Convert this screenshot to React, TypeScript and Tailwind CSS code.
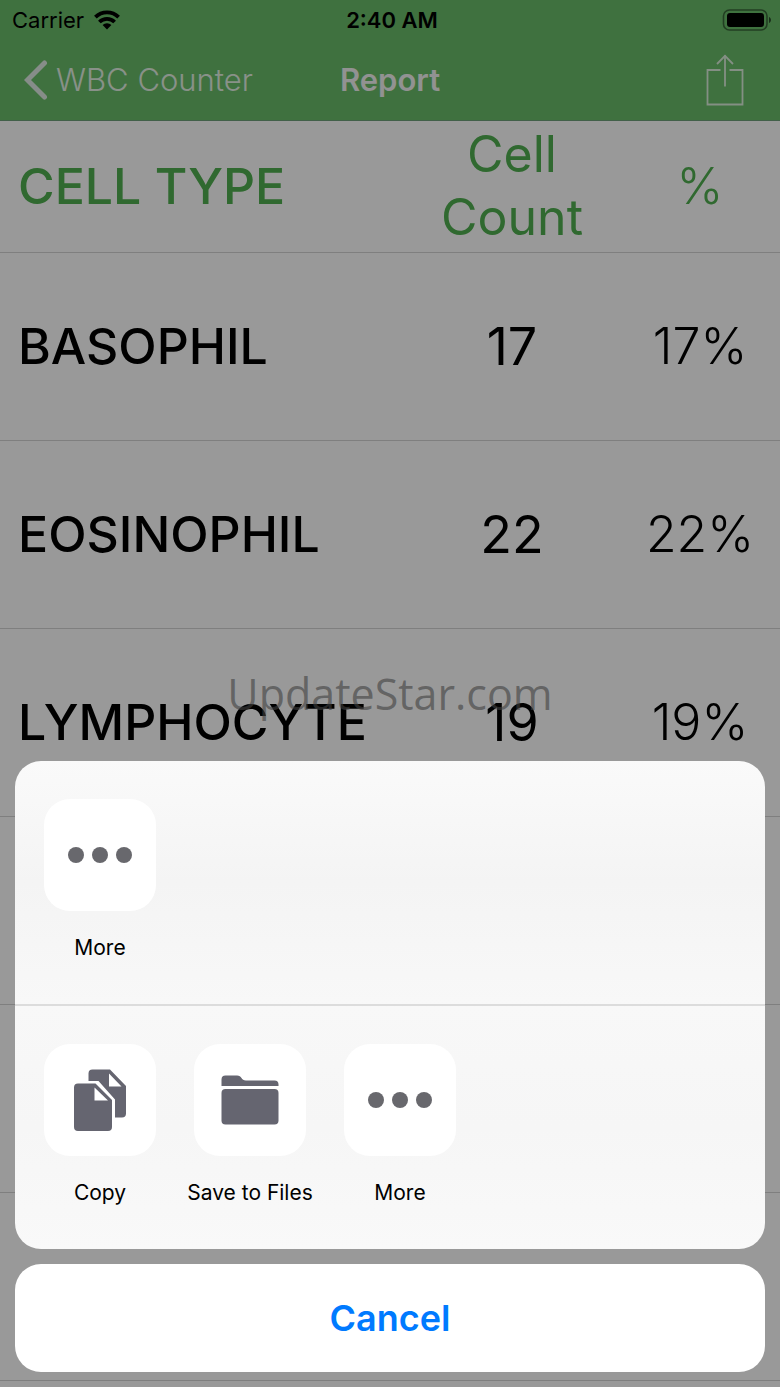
import type { ReactNode } from "react";

interface CellRow {
  name: string;
  count: number;
}

const rows: CellRow[] = [
  { name: "BASOPHIL", count: 17 },
  { name: "EOSINOPHIL", count: 22 },
  { name: "LYMPHOCYTE", count: 19 },
];

// blank rows that continue the table under the sheet
const EMPTY_ROWS = 4;

function WifiIcon() {
  return (
    <svg width="26" height="20" viewBox="0 0 26 20" fill="none" stroke="black" strokeWidth="3.8" aria-hidden>
      <path d="M1.4 7.2a16.4 16.4 0 0 1 23.2 0" />
      <path d="M5.400 12a10.700 10.700 0 0 1 15.200 0" />
      <path d="M8.600 15a6.200 6.200 0 0 1 8.800 0L13 19.400Z" fill="black" stroke="none" />
    </svg>
  );
}

function BatteryIcon() {
  return (
    <svg width="50" height="22" viewBox="0 0 50 22" aria-hidden>
      <rect x="1.500" y="1" width="43.500" height="20" rx="6" fill="none" stroke="black" strokeOpacity="0.45" strokeWidth="1.600" />
      <rect x="5" y="4" width="37" height="14" rx="3" fill="black" />
      <path d="M47 8c2.600 1 2.600 5 0 6z" fill="black" fillOpacity="0.6" />
    </svg>
  );
}

function BackIcon() {
  return (
    <svg width="24" height="40" viewBox="0 0 24 40" fill="none" stroke="#e0ece4" strokeWidth="5" strokeLinecap="round" strokeLinejoin="miter" aria-hidden>
      <path d="M20.500 3 3.500 20l17 17" />
    </svg>
  );
}

function ShareIcon() {
  return (
    <svg width="38" height="52" viewBox="0 0 38 52" fill="none" stroke="#dcefdc" strokeWidth="1.8" aria-hidden>
      <path d="M14.500 16H1.500v34.500h35V16h-13" />
      <path d="M19 32.500V1.500" />
      <path d="M11 10 19 1.800 27 10" />
    </svg>
  );
}

function DotsIcon() {
  return (
    <svg width="64" height="16" viewBox="0 0 64 16" fill="#68686d" aria-hidden>
      <circle cx="8" cy="8" r="8" />
      <circle cx="32" cy="8" r="8" />
      <circle cx="56" cy="8" r="8" />
    </svg>
  );
}

function CopyIcon() {
  return (
    <svg width="52" height="62" viewBox="0 0 52 62" fill="#656570" aria-hidden>
      <path
        fillRule="evenodd"
        d="M14.500 12V4.500a4 4 0 0 1 4-4H36L52 17v27.500a4 4 0 0 1-4 4h-7V30.500L24.500 12ZM35 4.500V17.500H47.500Z"
      />
      <path
        fillRule="evenodd"
        d="M4 14.500H21.500L38 31v27a4 4 0 0 1-4 4H4a4 4 0 0 1-4-4V18.500a4 4 0 0 1 4-4ZM20.500 18.500V31.500H34Z"
      />
    </svg>
  );
}

function FolderIcon() {
  return (
    <svg width="58" height="50" viewBox="0 0 58 50" fill="#656570" aria-hidden>
      <path d="M.5 11V4.500a4 4 0 0 1 4-4H16c5 0 4 5 9 5h28.500a4 4 0 0 1 4 4V11Z" />
      <rect x=".5" y="14" width="57" height="35.500" rx="4" />
    </svg>
  );
}

function SheetItem({ label, children }: { label: string; children: ReactNode }) {
  return (
    <button type="button" className="flex w-[150px] flex-col items-center gap-6">
      <span className="flex size-28 items-center justify-center rounded-[26px] bg-white">{children}</span>
      <span className="text-[21px] leading-[26px] whitespace-nowrap text-black">{label}</span>
    </button>
  );
}

function Report() {
  return (
    <div className="bg-white">
      <header className="border-b border-[#6fa07a] bg-[#69bc69]">
        <div className="grid h-10 grid-cols-[1fr_auto_1fr] items-center pr-2 pl-3 text-[22px] text-black">
          <div className="flex items-center gap-[10px]">
            <span>Carrier</span>
            <WifiIcon />
          </div>
          <span className="text-center font-semibold">2:40 AM</span>
          <div className="flex justify-end">
            <BatteryIcon />
          </div>
        </div>
        <nav className="grid h-20 grid-cols-[1fr_auto_1fr] items-center px-6 text-[31px]">
          <a href="#counter" className="flex items-center gap-2 font-light text-[#e4f2e4]">
            <BackIcon />
            WBC Counter
          </a>
          <h1 className="font-semibold text-[#f4f4f4]">Report</h1>
          <button type="button" aria-label="Share" className="mr-3 justify-self-end">
            <ShareIcon />
          </button>
        </nav>
      </header>

      <table className="w-full table-fixed border-collapse text-[50px] leading-[63px] text-black">
        <thead>
          <tr className="h-[131px] border-b border-[#d4d4d4] text-[#50b050]">
            <th className="pl-[18px] text-left font-medium">CELL TYPE</th>
            <th className="w-[216px] px-6 font-normal">Cell Count</th>
            <th className="w-40 font-light">%</th>
          </tr>
        </thead>
        <tbody>
          {rows.map((row) => (
            <tr key={row.name} className="h-[188px] border-b border-[#d4d4d4]">
              <th scope="row" className="pl-[18px] text-left font-medium">{row.name}</th>
              <td className="text-center text-[52px]">{row.count}</td>
              <td className="text-center font-light">{row.count}%</td>
            </tr>
          ))}
          {Array.from({ length: EMPTY_ROWS }, (_, i) => (
            <tr key={i} className="h-[188px] border-b border-[#d4d4d4]">
              <td colSpan={3} />
            </tr>
          ))}
        </tbody>
      </table>
    </div>
  );
}

export default function App() {
  return (
    <div className="relative h-screen overflow-hidden font-['Inter','Liberation_Sans',sans-serif]">
      <Report />
      <div className="absolute inset-0 bg-black/40" />
      <p className="absolute inset-x-0 top-1/2 -translate-y-1/2 text-center font-['Open_Sans','Noto_Sans',sans-serif] text-[43px] text-[#404040]/60">
        UpdateStar.com
      </p>

      <div role="dialog" aria-label="Share report" className="absolute inset-x-[15px] bottom-[15px] flex flex-col gap-[15px]">
        <div className="overflow-hidden rounded-[26px]">
          <div className="flex border-b-2 border-[#dcdcdc] bg-linear-to-b from-[#fafafa] via-[#f4f4f4] to-[#f8f8f8] px-[10px] pt-[38px] pb-[43px]">
            <SheetItem label="More">
              <DotsIcon />
            </SheetItem>
          </div>
          <div className="flex bg-linear-to-b from-[#f8f8f8] via-[#f6f6f6] to-[#f9f9f9] px-[10px] pt-[38px] pb-[43px]">
            <SheetItem label="Copy">
              <CopyIcon />
            </SheetItem>
            <SheetItem label="Save to Files">
              <FolderIcon />
            </SheetItem>
            <SheetItem label="More">
              <DotsIcon />
            </SheetItem>
          </div>
        </div>
        <button type="button" className="h-[108px] rounded-[26px] bg-white text-[36px] font-semibold text-[#007aff]">
          Cancel
        </button>
      </div>
    </div>
  );
}
